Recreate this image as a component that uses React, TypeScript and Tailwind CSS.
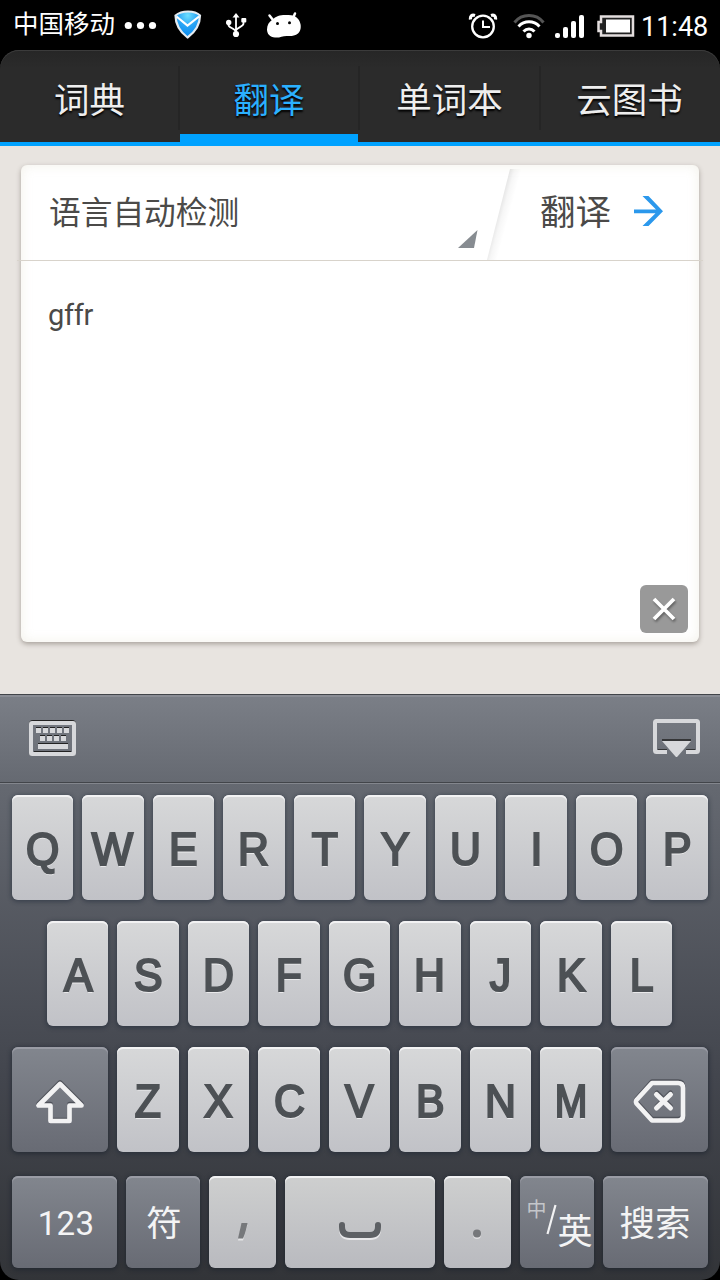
import React from "react";

const cjk = "font-['Roboto','Noto_Sans_CJK_SC',sans-serif]";

function StatusBar() {
  return (
    <div className="flex h-[50px] items-start bg-black text-white">
      <span className="ml-[13px] mt-[6px] w-[104px] whitespace-nowrap text-[25.5px] leading-[36px]">中国移动</span>
      <svg className="ml-[7px] mt-[21px]" width="34" height="9" fill="#fff">
        <circle cx="4.3" cy="4.5" r="3.6" />
        <circle cx="16.5" cy="4.5" r="3.6" />
        <circle cx="28.5" cy="4.5" r="3.6" />
      </svg>
      <svg className="ml-[15px] mt-[9px]" width="30" height="31" viewBox="0 0 30 31">
        <defs>
          <radialGradient id="shield" cx="0.5" cy="0.15" r="0.8">
            <stop offset="0" stopColor="#6fe0ff" />
            <stop offset="0.5" stopColor="#2aa5f5" />
            <stop offset="1" stopColor="#0a8bf0" />
          </radialGradient>
        </defs>
        <path d="M15 2.500C10 2.500 6 3.500 2.500 6.500C2.500 15 6 22 14.500 28.500C23.500 22 27 15 27 6.500C24 3.500 20 2.500 15 2.500Z" fill="url(#shield)" stroke="#e4ebf0" strokeWidth="2.200" />
        <path d="M3.500 7.500L14.500 16.500L26 7.500" fill="none" stroke="#fff" strokeWidth="2.200" />
      </svg>
      <svg className="ml-[23px] mt-[13px]" width="21" height="25" viewBox="0 0 21 25" fill="none" stroke="#fff" strokeWidth="1.800">
        <path d="M10 3V21M2.500 10V12C2.500 15 9 15 10 19M17.500 8V10.500C17.500 14 11 14 10 17.500" />
        <path d="M10 0L13.500 4.500H6.500Z" fill="#fff" stroke="none" />
        <circle cx="10" cy="21" r="3.100" fill="#fff" stroke="none" />
        <circle cx="2.700" cy="9.500" r="2.700" fill="#fff" stroke="none" />
        <rect x="15.300" y="5" width="5" height="4.600" rx="1" fill="#fff" stroke="none" />
      </svg>
      <svg className="ml-[19px] mt-[11px]" width="37" height="28" viewBox="0 0 37 28">
        <path d="M3.500 4.500L7 9M29 2.500L27 7" stroke="#fff" strokeWidth="2.500" strokeLinecap="round" />
        <path d="M6 9C10 5 14 4 19 4C24 4 27 4 30 6C34 9 35.500 14 34.500 18C33.500 23 29 25.500 22 25C17 24.500 14 27 9 26.500C4 26 1 23 1 18.500C1 14 3 11 6 9Z" fill="#fff" />
        <circle cx="11.500" cy="12.500" r="1.500" fill="#000" />
        <circle cx="23.500" cy="11.700" r="1.500" fill="#000" />
      </svg>
      <svg className="ml-auto mt-[13px]" width="30" height="26" viewBox="0 0 30 26" fill="none" stroke="#fff">
        <circle cx="15" cy="13.500" r="10.800" strokeWidth="2.300" />
        <path d="M15 7.500V14H22" strokeWidth="2" />
        <path d="M2.500 6.500C2 3 4 1.500 7 2.500M27.500 6.500C28 3 26 1.500 23 2.500" strokeWidth="3.200" />
      </svg>
      <svg className="ml-[15px] mt-[13px]" width="32" height="26" viewBox="0 0 32 26" fill="none">
        <path d="M1.500 9.500C9 0.300 23 0.300 30.500 9.500" stroke="#555" strokeWidth="3" />
        <path d="M5.500 13.500C11.500 7.300 20.500 7.300 26.500 13.500" stroke="#fff" strokeWidth="3" />
        <path d="M10.500 18.500C13.800 15 18.200 15 21.500 18.500" stroke="#fff" strokeWidth="3" />
        <circle cx="16" cy="22.500" r="2.700" fill="#fff" />
      </svg>
      <svg className="ml-[10px] mt-[15px]" width="30" height="24" fill="#fff">
        <rect x="0" y="18" width="5" height="5" rx="2" />
        <rect x="8" y="12" width="5" height="11" rx="2" />
        <rect x="16" y="6" width="5" height="17" rx="2" />
        <rect x="24" y="0" width="5" height="23" rx="2" />
      </svg>
      <svg className="ml-[12px] mt-[15px]" width="38" height="23">
        <path d="M4 1.500H36V20.500H4V16H1.500V7H4Z" fill="#222" stroke="#e4dede" strokeWidth="2.500" />
        <rect x="9" y="4.500" width="24" height="13" fill="#fff" />
      </svg>
      <span className="ml-[6px] mr-[12px] mt-[9px] w-[67px] whitespace-nowrap text-[27px] leading-[36px]">11:48</span>
    </div>
  );
}

function Tabs() {
  const tabs = ["词典", "翻译", "单词本", "云图书"];
  return (
    <div className="bg-black">
      <div className="flex h-24 rounded-t-[19px] border-b-4 border-[#00a2ff] bg-gradient-to-b from-[#262626] to-[#2b2b2b] to-20% shadow-[inset_0_1px_0_#3b3b3b]">
        {tabs.map((t, i) => (
          <div key={t} className="relative flex w-[180px] justify-center pt-4">
            <span className={i === 1 ? "mt-[9px] pr-[2px] text-[35.5px] leading-[52px] text-[#2bb0ff] [text-shadow:0_2px_2px_#000]" : "mt-[9px] pr-px text-[35.5px] leading-[52px] text-[#eee] [text-shadow:0_2px_2px_#000]"}>{t}</span>
            {i < 3 && <i className={i === 2 ? "absolute -right-px top-4 h-16 w-[2px] bg-[#252525]" : "absolute right-0 top-4 h-16 w-[2px] bg-[#252525]"} />}
            {i === 1 && <i className="absolute bottom-0 left-0 h-2 w-[178px] bg-[#00a2ff]" />}
          </div>
        ))}
      </div>
    </div>
  );
}

function Card() {
  return (
    <div className="mx-[21px] mt-[19px] flex h-[477px] flex-col rounded-[6px] bg-white text-[#4b4a48] shadow-[0_2px_5px_rgba(70,60,50,0.4),inset_0_0_12px_rgba(200,190,160,0.22)]">
      <div className="flex h-[95px]">
        <span className="ml-7 mt-[23px] flex-1 text-[31.7px] leading-[52px]">语言自动检测</span>
        <svg className="mt-[65px]" width="20" height="18">
          <path d="M0 18L19.500 0L16 18Z" fill="#878c91" />
        </svg>
        <svg className="ml-[8px]" width="50" height="95">
          <defs>
            <linearGradient id="fold" gradientUnits="userSpaceOnUse" x1="12" y1="48" x2="23" y2="51">
              <stop offset="0" stopColor="#000" stopOpacity="0.1" />
              <stop offset="0.4" stopColor="#000" stopOpacity="0.035" />
              <stop offset="1" stopColor="#000" stopOpacity="0" />
            </linearGradient>
          </defs>
          <path d="M24 4L1 95H16L39 4Z" fill="url(#fold)" />
        </svg>
        <span className="ml-[4px] mt-[22px] w-[72px] whitespace-nowrap text-[35.5px] leading-[52px]">翻译</span>
        <svg className="ml-[22px] mr-[35px] mt-[31px]" width="30" height="31">
          <path d="M0 13.500H22L8.500 0H14.500L29 15.200L14.500 30H8.500L21.500 17.300H0Z" fill="#2b98ec" />
        </svg>
      </div>
      <div className="-mx-1 h-px shrink-0 bg-[#d8d3cb]" />
      <div className="flex flex-1 flex-col justify-between">
        <span className="ml-[27px] mt-[33px] text-[29px] leading-[42px] tracking-[-0.3px]">gffr</span>
        <button className="mb-[9px] mr-[11px] flex size-12 items-center justify-center self-end rounded-[6px] bg-[#999]">
          <svg width="24" height="24" className="drop-shadow-[1px_2px_1px_rgba(0,0,0,0.35)]">
            <path d="M2 2L22 22M22 2L2 22" stroke="#fff" strokeWidth="3.800" />
          </svg>
        </button>
      </div>
    </div>
  );
}

function Letter({ c }: { c: string }) {
  return (
    <div className="flex h-[105px] min-w-0 flex-1 items-center justify-center rounded-[6px] bg-gradient-to-b from-[#d7d8d9] to-[#c1c2c7] font-['Liberation_Sans',sans-serif] text-[45.5px] leading-none text-[#4d5155] shadow-[inset_0_2px_0_#f2f2f3,0_1px_4px_1px_rgba(25,35,50,0.45)] [-webkit-text-stroke:2.2px_#4d5155] [text-shadow:0_2px_0_rgba(255,255,255,0.6)]">
      <span className={c === "M" ? "mt-[5px] scale-x-[0.86]" : c === "W" ? "mt-[5px] scale-x-[0.96]" : "mt-[5px] scale-x-[0.94]"}>{c}</span>
    </div>
  );
}

const darkKey =
  "flex items-center justify-center rounded-[6px] bg-gradient-to-b from-[#82868e] to-[#686b74] text-[#f4f4f5] shadow-[inset_0_2px_0_#9a9ca5,0_1px_4px_1px_rgba(20,28,40,0.5)]";
const lightKey =
  "flex justify-center rounded-[6px] bg-gradient-to-b from-[#cecfcf] to-[#b9babf] shadow-[inset_0_2px_0_#f2f2f3,0_1px_4px_1px_rgba(20,28,40,0.5)]";

function Toolbar() {
  return (
    <div className="flex h-[90px] shrink-0 items-start justify-between border-t border-[#42454a] bg-gradient-to-b from-[#7b7f87] to-[#656971] shadow-[inset_0_2px_0_#8a8d95,inset_0_-1px_0_#83868d,inset_0_-2px_0_#42454a]">
      <svg className="ml-[29px] mt-[25px]" width="47" height="36">
        <rect x="2" y="2" width="43" height="32" rx="2" fill="none" stroke="#222" strokeWidth="4" />
        <rect x="2" y="3" width="43" height="31" rx="1" fill="none" stroke="#d7d8db" strokeWidth="4" />
        {[7, 14, 21, 28, 35].map((x) => (
          <g key={x}>
            <rect x={x} y="7" width="5" height="3" fill="#222" />
            <rect x={x} y="8" width="5" height="5" fill="#d7d8db" />
          </g>
        ))}
        {[11, 18, 25, 32].map((x) => (
          <g key={x}>
            <rect x={x} y="15" width="5" height="3" fill="#222" />
            <rect x={x} y="16" width="5" height="5" fill="#d7d8db" />
          </g>
        ))}
        <rect x="9" y="23" width="30" height="3" fill="#222" />
        <rect x="9" y="24" width="30" height="5" fill="#d7d8db" />
        <rect x="5" y="31" width="37" height="1" fill="#222" />
      </svg>
      <svg className="mr-[20px] mt-[24px]" width="47" height="39" fill="none">
        <path d="M14 31H5M33 31H42" stroke="#222" strokeWidth="1.500" />
        <path d="M14 33H3.500Q2 33 2 31.500V3.500Q2 2 3.500 2H43.500Q45 2 45 3.500V31.500Q45 33 43.500 33H33" stroke="#d7d8db" strokeWidth="4" />
        <path d="M9 21H38" stroke="#222" strokeWidth="1.500" />
        <path d="M9 22H38L24.500 37.500Q23.500 38.500 22.500 37.500Z" fill="#d7d8db" />
      </svg>
    </div>
  );
}

function Keyboard() {
  return (
    <div className="mt-auto bg-black">
      <div className="flex h-[586px] flex-col rounded-b-[19px] bg-gradient-to-b from-[#656971] from-15% via-[#43464e] via-65% to-[#323438]">
        <Toolbar />
        <div className="mt-[11px] flex gap-[9px] pl-[11.6px] pr-[12.3px]">
          {"QWERTYUIOP".split("").map((c) => <Letter key={c} c={c} />)}
        </div>
        <div className="mt-[21px] flex gap-[9px] pl-[47px] pr-12">
          {"ASDFGHJKL".split("").map((c) => <Letter key={c} c={c} />)}
        </div>
        <div className="mt-[21px] flex gap-[9px] px-3">
          <div className={`${darkKey} w-24`}>
            <svg className="mt-[5px]" width="50" height="46" viewBox="0 0 50 46" fill="none" strokeLinejoin="round" strokeWidth="4.700">
              <path d="M25 3.500L3.500 25H15.500V41H34.500V25H46.500Z" stroke="#4f525a" />
              <path d="M25 5L3.500 26.500H15.500V42H34.500V26.500H46.500Z" stroke="#f2f2f3" />
            </svg>
          </div>
          {"ZXCVBNM".split("").map((c) => <Letter key={c} c={c} />)}
          <div className={`${darkKey} w-[97px]`}>
            <svg className="mt-[4px]" width="54" height="46" viewBox="0 0 54 46" fill="none" strokeLinejoin="round" strokeLinecap="round">
              <g stroke="#50535b">
                <path d="M19 2.500H45Q50 2.500 50 7.500V35Q50 40 45 40H19L3.500 23Q2.500 21.500 3.500 20Z" strokeWidth="4.700" />
                <path d="M24 14L37.500 27.500M37.500 14L24 27.500" strokeWidth="5" />
              </g>
              <g stroke="#f2f2f3">
                <path d="M19 4H45Q50 4 50 9V36.500Q50 41.500 45 41.500H19L3.500 24.500Q2.500 22.500 3.500 21Z" strokeWidth="4.700" />
                <path d="M23.500 15.500L37.500 29M37.500 15.500L23.500 29" strokeWidth="5" />
              </g>
            </svg>
          </div>
        </div>
        <div className="mt-6 flex h-[92px] gap-[9px] px-3">
          <div className={`${darkKey} w-[105px] pl-[3px] pt-[3px] text-[33px] tracking-[0.3px]`}>123</div>
          <div className={`${darkKey} w-[74px] pl-[2px] pt-[6px] text-[35.5px]`}>符</div>
          <div className={`${lightKey} w-[67px]`}>
            <svg className="mt-[47px]" width="12" height="18">
              <path d="M4.500 2H10.500L6 17.500H1Z" fill="#e4e4e6" />
              <path d="M4.500 0H10.500C9.500 6 8 11 6 15.500H1Z" fill="#76787b" />
            </svg>
          </div>
          <div className={`${lightKey} w-[150px]`}>
            <svg className="mt-[46px]" width="44" height="20" fill="none" strokeLinecap="round" strokeWidth="6">
              <path d="M4 5V7Q4 15 12 15H32Q40 15 40 7V5" stroke="#e8e8ea" />
              <path d="M4 3V5Q4 13 12 13H32Q40 13 40 5V3" stroke="#5d6064" />
            </svg>
          </div>
          <div className={`${lightKey} w-[67px]`}>
            <svg className="mr-px mt-[53px]" width="10" height="12">
              <circle cx="5" cy="6" r="4" fill="#e0e0e2" />
              <circle cx="5" cy="4.500" r="4" fill="#76787b" />
            </svg>
          </div>
          <div className={`${darkKey} w-[74px] whitespace-nowrap pl-px`}>
            <span className="-mt-[24px] w-5 text-[20px] leading-none text-[#c4c6ca]">中</span>
            <svg className="-mt-1" width="11" height="32">
              <path d="M1.500 30L9.500 1" stroke="#f2f2f3" strokeWidth="2.200" />
            </svg>
            <span className="-mr-1 mt-[20px] text-[35px] leading-none">英</span>
          </div>
          <div className={`${darkKey} w-[105px] pr-px pt-[6px] text-[35.5px]`}>搜索</div>
        </div>
      </div>
    </div>
  );
}

export default function App() {
  return (
    <div lang="zh-CN" className={`${cjk} flex h-[1280px] w-[720px] flex-col overflow-hidden bg-[#e8e4e0]`}>
      <StatusBar />
      <Tabs />
      <Card />
      <Keyboard />
    </div>
  );
}
